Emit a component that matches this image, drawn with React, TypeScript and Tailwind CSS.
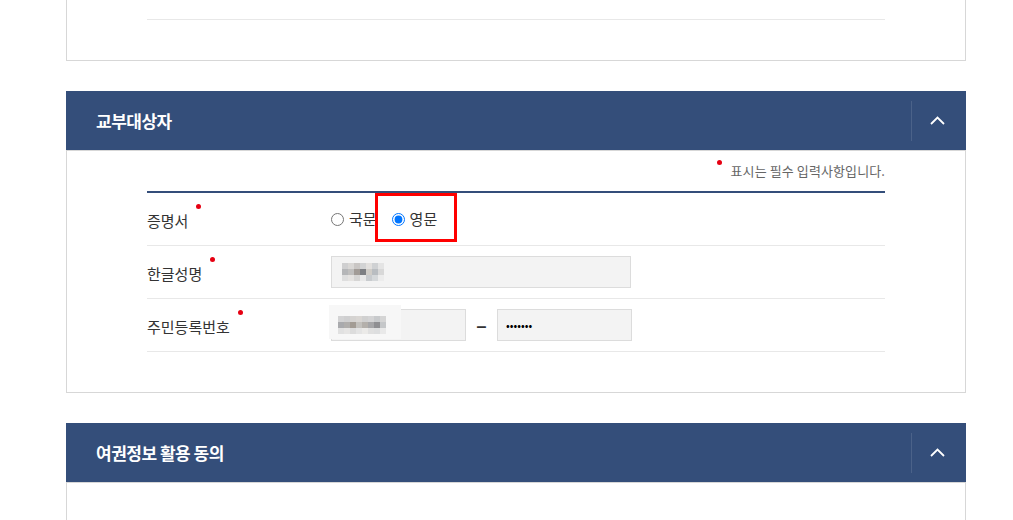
const font = { fontFamily: '"Noto Sans CJK KR", "Noto Sans", sans-serif' };

function Mosaic({ cells }: { cells: string[][] }) {
  return (
    <div className="flex flex-col">
      {cells.map((row, i) => (
        <div key={i} className="flex">
          {row.map((c, j) => (
            <div key={j} className="w-[6px] h-[6px]" style={{ backgroundColor: c }} />
          ))}
        </div>
      ))}
    </div>
  );
}

function Chevron() {
  return (
    <svg width="15" height="9" viewBox="0 0 15 9" fill="none">
      <path d="M1 8L7.5 1.5 14 8" stroke="#fff" strokeWidth="1.8" />
    </svg>
  );
}

function PanelHeader({ title }: { title: string }) {
  return (
    <div className="h-[59px] bg-[#344e7a] flex items-center justify-between">
      <h2 className="pl-[30px] text-[17px] font-bold text-white tracking-[-0.5px]">{title}</h2>
      <div className="flex items-center h-full">
        <div className="w-px h-[40px] bg-[#4b6289]" />
        <button className="w-[50px] mr-[4px] h-full flex items-center justify-center" aria-label="접기">
          <Chevron />
        </button>
      </div>
    </div>
  );
}

function Label({ text }: { text: string }) {
  return (
    <div className="w-[184px] text-[15px] text-[#333] pt-[5px]">
      <span className="relative">
        {text}
        <span className="absolute -right-[13px] -top-[6px] w-[5px] h-[5px] rounded-full bg-[#e60012]" />
      </span>
    </div>
  );
}

const nameCells = [
  ["#cfcfd0", "#d9d7d5", "#c9c6c4", "#d2d3d4", "#e2e0de", "#cfd1d3", "#e4e4e4"],
  ["#b5b6b8", "#c0bfbe", "#a29c97", "#7d7f83", "#d0cdc8", "#b9bdc1", "#d8d8d8"],
  ["#dedede", "#e5e3e1", "#d6d5d4", "#e8e8e8", "#c8cbce", "#d5d8da", "#ececec"],
];

const rrnCells = [
  ["#d3d3d4", "#cfcfd0", "#d5d3d1", "#d9d6d3", "#d0d0d0", "#d4d4d5", "#c8cacc", "#d5d5d5"],
  ["#a9aaad", "#b0aeac", "#a39c94", "#c3c1bd", "#b4b0ab", "#a6a6a8", "#8f8f92", "#c5c7c9"],
  ["#e1e1e1", "#e6e5e4", "#dcdcdc", "#e4e4e4", "#ebeae8", "#e0e0e0", "#dddedf", "#e9e9e9"],
];

export default function App() {
  return (
    <div className="bg-white w-[1013px] h-[520px] overflow-hidden" style={font}>
      <div className="ml-[66px] w-[900px]">
        {/* previous panel (cut off) */}
        <div className="border-x border-b border-[#d7d7d7] px-[80px] pt-[19px] pb-[40px]">
          <div className="h-px bg-[#e8e8e8]" />
        </div>

        {/* 교부대상자 */}
        <section className="mt-[30px]">
          <PanelHeader title="교부대상자" />
          <div className="border border-[#d7d7d7] px-[80px] pb-[40px]">
            <div className="h-[40px] flex items-center justify-end">
              <span className="relative text-[13px] text-[#666] tracking-[0.1px]">
                <span className="absolute -left-[14px] -top-[1px] w-[5px] h-[5px] rounded-full bg-[#e60012]" />
                표시는 필수 입력사항입니다.
              </span>
            </div>
            <div className="h-[2px] bg-[#344e7a]" />

            <div className="relative h-[53px] border-b border-[#e8e8e8] flex items-center">
              <Label text="증명서" />
              <div className="flex items-center text-[15px] text-[#333]">
                <label className="flex items-center gap-[5px]">
                  <input type="radio" name="cert" className="m-0 w-[13px] h-[13px]" readOnly />
                  국문
                </label>
                <label className="flex items-center gap-[5px] ml-[15px]">
                  <input type="radio" name="cert" className="m-0 w-[13px] h-[13px]" defaultChecked />
                  영문
                </label>
              </div>
              <div className="absolute left-[228px] top-[0px] w-[82px] h-[49px] border-[3px] border-[#ff0000] pointer-events-none" />
            </div>

            <div className="h-[53px] border-b border-[#e8e8e8] flex items-center">
              <Label text="한글성명" />
              <div className="w-[300px] h-[32px] bg-[#f3f3f3] border border-[#dcdcdc] flex items-center pl-[10px]">
                <Mosaic cells={nameCells} />
              </div>
            </div>

            <div className="h-[53px] border-b border-[#e8e8e8] flex items-center">
              <Label text="주민등록번호" />
              <div className="relative w-[135px] h-[32px] bg-[#f3f3f3] border border-[#dcdcdc] flex items-center pl-[6px]">
                <div className="absolute -left-[3px] -top-[5px] w-[72px] h-[34px] bg-[#f7f7f7]" />
                <div className="relative">
                  <Mosaic cells={rrnCells} />
                </div>
              </div>
              <span className="w-[31px] text-center text-[20px] font-bold text-[#333] leading-none">–</span>
              <input
                type="password"
                value="1234567"
                readOnly
                className="w-[135px] h-[32px] bg-[#f3f3f3] border border-[#dcdcdc] px-[8px] text-[11px] text-black outline-none"
              />
            </div>
          </div>
        </section>

        {/* 여권정보 활용 동의 */}
        <section className="mt-[30px]">
          <PanelHeader title="여권정보 활용 동의" />
          <div className="border border-[#d7d7d7] h-[80px]" />
        </section>
      </div>
    </div>
  );
}
